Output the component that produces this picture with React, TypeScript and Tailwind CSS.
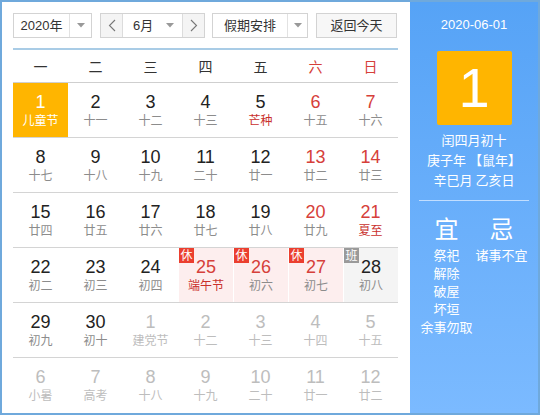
import React from 'react';

type Day = {
  n: number;
  l: string;
  other?: boolean;
  today?: boolean;
  wknd?: boolean;
  term?: boolean;
  rest?: boolean;
  work?: boolean;
};

const rows: Day[][] = [
  [
    { n: 1, l: '儿童节', today: true },
    { n: 2, l: '十一' },
    { n: 3, l: '十二' },
    { n: 4, l: '十三' },
    { n: 5, l: '芒种', term: true },
    { n: 6, l: '十五', wknd: true },
    { n: 7, l: '十六', wknd: true },
  ],
  [
    { n: 8, l: '十七' },
    { n: 9, l: '十八' },
    { n: 10, l: '十九' },
    { n: 11, l: '二十' },
    { n: 12, l: '廿一' },
    { n: 13, l: '廿二', wknd: true },
    { n: 14, l: '廿三', wknd: true },
  ],
  [
    { n: 15, l: '廿四' },
    { n: 16, l: '廿五' },
    { n: 17, l: '廿六' },
    { n: 18, l: '廿七' },
    { n: 19, l: '廿八' },
    { n: 20, l: '廿九', wknd: true },
    { n: 21, l: '夏至', wknd: true, term: true },
  ],
  [
    { n: 22, l: '初二' },
    { n: 23, l: '初三' },
    { n: 24, l: '初四' },
    { n: 25, l: '端午节', rest: true, term: true },
    { n: 26, l: '初六', rest: true },
    { n: 27, l: '初七', rest: true },
    { n: 28, l: '初八', work: true },
  ],
  [
    { n: 29, l: '初九' },
    { n: 30, l: '初十' },
    { n: 1, l: '建党节', other: true },
    { n: 2, l: '十二', other: true },
    { n: 3, l: '十三', other: true },
    { n: 4, l: '十四', other: true },
    { n: 5, l: '十五', other: true },
  ],
  [
    { n: 6, l: '小暑', other: true },
    { n: 7, l: '高考', other: true },
    { n: 8, l: '十八', other: true },
    { n: 9, l: '十九', other: true },
    { n: 10, l: '二十', other: true },
    { n: 11, l: '廿一', other: true },
    { n: 12, l: '廿二', other: true },
  ],
];

const weekdays = ['一', '二', '三', '四', '五', '六', '日'];

function Caret() {
  return (
    <svg width="8" height="5" viewBox="0 0 8 5">
      <path d="M0 0 L8 0 L4 4.5 Z" fill="#999" />
    </svg>
  );
}

function Chevron({ dir }: { dir: 'left' | 'right' }) {
  return (
    <svg width="8" height="13" viewBox="0 0 8 13">
      <path
        d={dir === 'left' ? 'M7 1 L1.5 6.5 L7 12' : 'M1 1 L6.5 6.5 L1 12'}
        fill="none"
        stroke="#777"
        strokeWidth="1.1"
      />
    </svg>
  );
}

function Cell({ d }: { d: Day }) {
  let bg = '';
  if (d.today) bg = 'bg-[#ffb500]';
  else if (d.rest) bg = 'bg-[#fdeeee] border-l border-white';
  else if (d.work) bg = 'bg-[#f4f4f4] border-l border-white';

  let num = 'text-[#222]';
  let lun = 'text-[#8c8c8c]';
  if (d.today) {
    num = 'text-white';
    lun = 'text-white';
  } else if (d.other) {
    num = 'text-[#bdbdbd]';
    lun = 'text-[#bdbdbd]';
  } else {
    if (d.wknd || d.rest) num = 'text-[#d6403a]';
    if (d.term) lun = 'text-[#c9302c]';
  }

  return (
    <div className={`relative h-[54px] flex flex-col items-center ${bg}`}>
      {(d.rest || d.work) && (
        <span
          className={`absolute left-0 top-0 w-[15px] h-[15px] flex items-center justify-center text-[12px] leading-none text-white ${
            d.rest ? 'bg-[#eb3f2f]' : 'bg-[#9a9a9a]'
          }`}
        >
          {d.rest ? '休' : '班'}
        </span>
      )}
      <div className={`pt-[8px] h-[30px] text-[18px] leading-[22px] ${num}`}>{d.n}</div>
      <div className={`text-[12px] leading-[16px] ${lun}`}>{d.l}</div>
    </div>
  );
}

export default function App() {
  return (
    <div className="w-[540px] h-[415px] border-2 border-[#6fa9dc] flex bg-white font-['Liberation_Sans','Noto_Sans_CJK_SC',sans-serif] text-[#333] overflow-hidden">
      <div className="w-[408px] pl-[11px] pt-[11px]">
        <div className="flex h-[25px] text-[13px]">
          <div className="w-[79px] flex border border-[#d3d3d3] bg-white">
            <div className="w-[55px] flex items-center justify-center">2020年</div>
            <div className="flex-1 flex items-center justify-center border-l border-[#e2e2e2]">
              <Caret />
            </div>
          </div>
          <div className="ml-[8px] w-[105px] flex border border-[#d3d3d3] bg-white">
            <div className="w-[22px] flex items-center justify-center bg-[#f4f4f4] border-r border-[#dcdcdc]">
              <Chevron dir="left" />
            </div>
            <div className="flex-1 flex items-center pl-[10px] pr-[8px] justify-between">
              <span>6月</span>
              <Caret />
            </div>
            <div className="w-[22px] flex items-center justify-center bg-[#f4f4f4] border-l border-[#dcdcdc]">
              <Chevron dir="right" />
            </div>
          </div>
          <div className="ml-[7px] w-[96px] flex border border-[#d3d3d3] bg-white">
            <div className="w-[74px] flex items-center justify-center">假期安排</div>
            <div className="flex-1 flex items-center justify-center border-l border-[#e2e2e2]">
              <Caret />
            </div>
          </div>
          <div className="ml-[8px] w-[81px] flex items-center justify-center border border-[#d3d3d3] bg-[#f7f7f7]">
            返回今天
          </div>
        </div>
        <div className="mt-[10px] w-[385px] h-[2px] bg-[#a9cce6]" />
        <div className="w-[385px] grid grid-cols-7 h-[33px] border-b border-[#cfcfcf] text-[14px]">
          {weekdays.map((w, i) => (
            <div
              key={w}
              className={`flex items-center justify-center pt-[2px] ${i >= 5 ? 'text-[#d6403a]' : 'text-[#333]'}`}
            >
              {w}
            </div>
          ))}
        </div>
        {rows.map((r, ri) => (
          <div
            key={ri}
            className={`w-[385px] grid grid-cols-7 ${ri < 5 ? 'border-b border-[#d4d4d4]' : ''}`}
          >
            {r.map((d, ci) => (
              <Cell key={ci} d={d} />
            ))}
          </div>
        ))}
      </div>
      <div className="flex-1 bg-linear-to-b from-[#56a3f6] to-[#7bbaff] flex flex-col items-center text-white font-['Noto_Sans_CJK_SC',sans-serif]">
        <div className="mt-[13px] text-[13px] leading-[20px] font-['Liberation_Sans',sans-serif]">2020-06-01</div>
        <div className="mt-[16px] w-[75px] h-[74px] rounded-[2px] bg-[#ffb500] flex items-center justify-center text-[56px] leading-none font-['Liberation_Sans',sans-serif]">
          1
        </div>
        <div className="mt-[5px] text-[13px] leading-[20px] text-center">
          <div>闰四月初十</div>
          <div>庚子年 【鼠年】</div>
          <div>辛巳月 乙亥日</div>
        </div>
        <div className="mt-[10px] w-[110px] h-px bg-[#c2deff]" />
        <div className="mt-[12px] w-[110px] grid grid-cols-2">
          <div className="flex flex-col items-center">
            <div className="text-[24px] leading-[30px]">宜</div>
            <div className="mt-[3px] text-[13px] leading-[18px] text-center whitespace-nowrap">
              <div>祭祀</div>
              <div>解除</div>
              <div>破屋</div>
              <div>坏垣</div>
              <div>余事勿取</div>
            </div>
          </div>
          <div className="flex flex-col items-center">
            <div className="text-[24px] leading-[30px]">忌</div>
            <div className="mt-[3px] text-[13px] leading-[18px] text-center whitespace-nowrap">
              <div>诸事不宜</div>
            </div>
          </div>
        </div>
      </div>
    </div>
  );
}
